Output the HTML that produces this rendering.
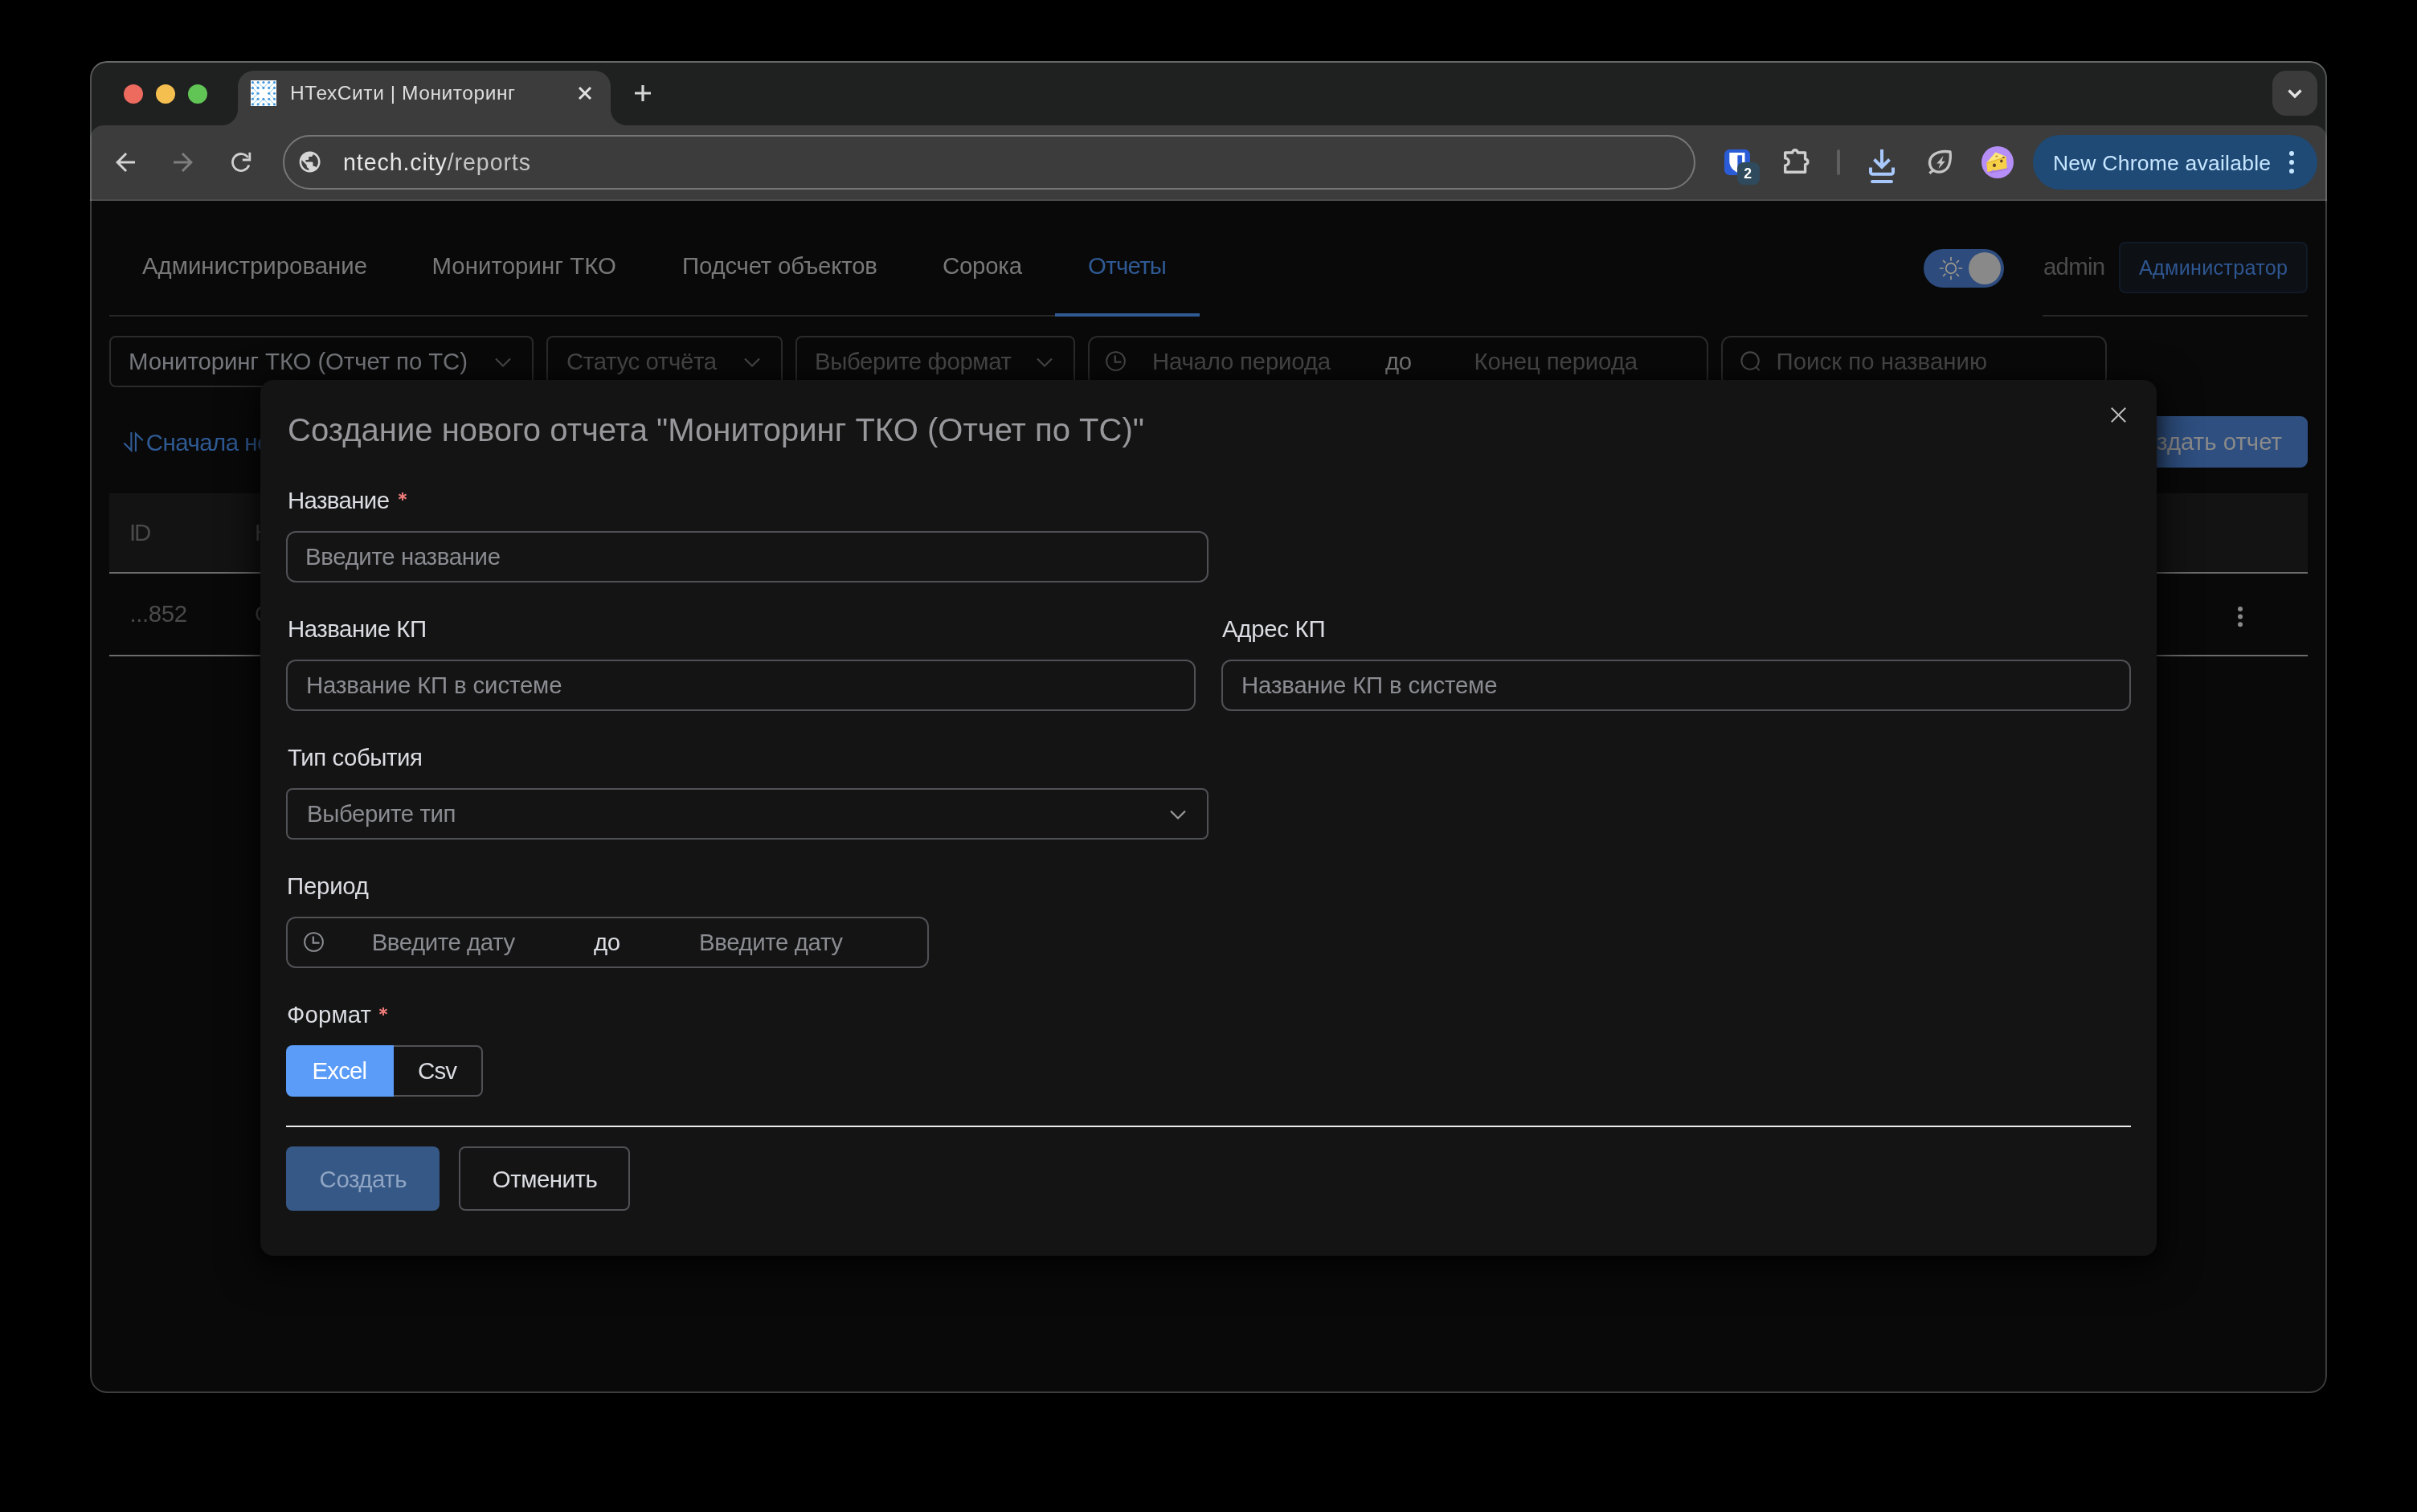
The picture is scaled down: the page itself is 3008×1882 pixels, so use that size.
<!DOCTYPE html>
<html lang="ru"><head><meta charset="utf-8"><title>НТехСити | Мониторинг</title>
<style>
html,body{margin:0;padding:0;background:#000;width:3008px;height:1882px;overflow:hidden}
body{position:relative;font-family:'Liberation Sans',sans-serif}
.t{position:absolute;line-height:1;white-space:pre}
.a{position:absolute;box-sizing:border-box}
#win{position:absolute;left:112px;top:76px;width:2784px;height:1658px;box-sizing:border-box;border-radius:21px;overflow:hidden;background:#090909}
#edge{position:absolute;left:0;top:0;width:2784px;height:1658px;box-sizing:border-box;border-radius:21px;box-shadow:inset 0 0 0 2px rgba(255,255,255,.215),inset 0 2px 0 0 rgba(255,255,255,.15);z-index:9;pointer-events:none}
#g{position:absolute;left:-112px;top:-76px;width:3008px;height:1882px;will-change:transform}
.box{position:absolute;box-sizing:border-box;border:2px solid #2b2b2b;border-radius:12px;background:#090909}
.in{position:absolute;box-sizing:border-box;border:2px solid #505155;border-radius:12px;background:#141414}
svg{position:absolute;overflow:visible}
</style></head>
<body>
<div id="win"><div id="g">
<!-- ===== tab strip ===== -->
<div class="a" style="left:112px;top:76px;width:2784px;height:98px;background:#1f2020"></div>
<div class="a" style="left:154px;top:105px;width:24px;height:24px;border-radius:50%;background:#ed6a5f"></div>
<div class="a" style="left:194px;top:105px;width:24px;height:24px;border-radius:50%;background:#f5bf4f"></div>
<div class="a" style="left:234px;top:105px;width:24px;height:24px;border-radius:50%;background:#61c555"></div>
<!-- active tab -->
<div class="a" style="left:296px;top:88px;width:464px;height:68px;background:#3c3c3c;border-radius:20px 20px 0 0"></div>
<div class="a" style="left:276px;top:136px;width:20px;height:20px;background:radial-gradient(circle at 0 0,rgba(60,60,60,0) 19.5px,#3c3c3c 20.5px)"></div>
<div class="a" style="left:760px;top:136px;width:20px;height:20px;background:radial-gradient(circle at 100% 0,rgba(60,60,60,0) 19.5px,#3c3c3c 20.5px)"></div>
<!-- favicon -->
<svg style="left:312px;top:100px" width="32" height="32" viewBox="0 0 32 32"><rect width="32" height="32" fill="#fff"/><path d="M2.4 2.6L9.1 9.4M9.1 2.6L15.9 9.4M22.7 2.6L15.9 9.4M29.5 2.6L22.7 9.4M2.4 9.4L9.1 16.3M2.4 23.2L9.1 16.3M29.5 9.4L22.7 16.3M29.5 23.2L22.7 16.3M2.4 29.9L9.1 23.2M9.1 29.9L15.9 23.2M22.7 29.9L15.9 23.2M29.5 29.9L22.7 23.2" stroke="#86c9e4" stroke-width="1" fill="none"/><g fill="#3f97dd"><circle cx="2.4" cy="2.6" r="1.55"/><circle cx="9.1" cy="2.6" r="1.55"/><circle cx="15.9" cy="2.6" r="1.55"/><circle cx="22.7" cy="2.6" r="1.55"/><circle cx="29.5" cy="2.6" r="1.55"/><circle cx="2.4" cy="9.4" r="1.55"/><circle cx="9.1" cy="9.4" r="1.55"/><circle cx="15.9" cy="9.4" r="1.55"/><circle cx="22.7" cy="9.4" r="1.55"/><circle cx="29.5" cy="9.4" r="1.55"/><circle cx="2.4" cy="16.3" r="1.55"/><circle cx="9.1" cy="16.3" r="1.55"/><circle cx="22.7" cy="16.3" r="1.55"/><circle cx="29.5" cy="16.3" r="1.55"/><circle cx="2.4" cy="23.2" r="1.55"/><circle cx="9.1" cy="23.2" r="1.55"/><circle cx="15.9" cy="23.2" r="1.55"/><circle cx="22.7" cy="23.2" r="1.55"/><circle cx="29.5" cy="23.2" r="1.55"/><circle cx="2.4" cy="29.9" r="1.55"/><circle cx="9.1" cy="29.9" r="1.55"/><circle cx="15.9" cy="29.9" r="1.55"/><circle cx="22.7" cy="29.9" r="1.55"/><circle cx="29.5" cy="29.9" r="1.55"/></g></svg>
<!-- tab close, plus -->
<svg style="left:720px;top:108px" width="16" height="16" viewBox="0 0 16 16"><path d="M1 1l14 14M15 1L1 15" stroke="#e2e2e2" stroke-width="3" fill="none"/></svg>
<svg style="left:790px;top:106px" width="20" height="20" viewBox="0 0 20 20"><path d="M10 0v20M0 10h20" stroke="#d6d6d6" stroke-width="3.2" fill="none"/></svg>
<!-- tab search -->
<div class="a" style="left:2828px;top:88px;width:56px;height:56px;border-radius:17px;background:#3b3b3b"></div>
<svg style="left:2847px;top:111px" width="18" height="11" viewBox="0 0 18 11"><path d="M1.5 1.5l7.5 7.5 7.5-7.5" stroke="#e2e2e2" stroke-width="3.4" fill="none"/></svg>
<!-- ===== toolbar ===== -->
<div class="a" style="left:112px;top:156px;width:2784px;height:94px;background:#3c3c3c;border-radius:17px 17px 0 0;border-bottom:2px solid #4b4d4b"></div>
<svg style="left:138px;top:184px" width="36" height="36" viewBox="0 0 24 24"><path fill="#d2d2d2" d="M20 11H7.83l5.59-5.59L12 4l-8 8 8 8 1.41-1.41L7.83 13H20v-2z"/></svg>
<svg style="left:210px;top:184px" width="36" height="36" viewBox="0 0 24 24"><path fill="#7e7e7e" d="M12 4l-1.41 1.41L16.17 11H4v2h12.17l-5.58 5.59L12 20l8-8z"/></svg>
<svg style="left:282px;top:184px" width="36" height="36" viewBox="282 184 36 36"><g fill="none" stroke="#d0d0d0" stroke-width="2.800"><path d="M308.600 195.980A10.500 10.500 0 1 0 309.870 205.590"/><path d="M310.800 189.800V199H301.800"/></g></svg>
<!-- omnibox -->
<div class="a" style="left:352px;top:168px;width:1758px;height:68px;border-radius:34px;border:2px solid #777;background:#3c3c3c"></div>
<svg style="left:370.4px;top:186.4px" width="31.2" height="31.2" viewBox="0 0 24 24"><path fill="#d6d6d6" d="M12 2C6.48 2 2 6.48 2 12s4.48 10 10 10 10-4.48 10-10S17.52 2 12 2zm-1 17.93c-3.95-.49-7-3.85-7-7.93 0-.62.08-1.21.21-1.79L9 15v1c0 1.1.9 2 2 2v1.93zm6.9-2.54c-.26-.81-1-1.39-1.9-1.39h-1v-3c0-.55-.45-1-1-1H8v-2h2c.55 0 1-.45 1-1V7h2c1.1 0 2-.9 2-2v-.41c2.93 1.19 5 4.06 5 7.41 0 2.08-.8 3.97-2.1 5.39z"/></svg>
<!-- bitwarden -->
<div class="a" style="left:2146px;top:186px;width:32px;height:32px;border-radius:6.5px;background:#2b5cd8"></div>
<svg style="left:2152px;top:189.500px" width="20" height="26" viewBox="0 0 20 26"><path fill="#fff" d="M.300 0h19.200v11c0 7-5.500 11.500-9.600 13.600C5.800 22.500.300 18 .300 11z"/><path fill="#2b5cd8" d="M10.400 3.300h5.700v7.900c0 4.200-2.900 7.200-5.700 9z"/></svg>
<div class="a" style="left:2162px;top:202px;width:28px;height:28px;border-radius:8px;background:#2e4a5c"></div>
<span class="t" style="left:2170.300px;top:207.600px;font-size:17.600px;font-weight:bold;color:#fff">2</span>
<!-- puzzle -->
<svg style="left:2220px;top:184px" width="32" height="32" viewBox="0 0 32 32"><path fill="none" stroke="#cfcfcf" stroke-width="3.400" stroke-linejoin="round" d="M1.700 6H10.700A3.300 3.300 0 0 1 17.300 6H26.600V14.100A3.300 3.300 0 0 1 26.600 20.700V30.300H1.700V21.900A4.500 4.500 0 0 0 1.700 12.900z"/></svg>
<div class="a" style="left:2286.300px;top:186px;width:3.800px;height:32px;border-radius:2px;background:#5f5f5f"></div>
<!-- download -->
<svg style="left:2322px;top:182px" width="40" height="50" viewBox="0 0 40 50"><g fill="none" stroke="#a8c7fa" stroke-width="4"><path d="M20 4v22M10.500 16.500L20 26l9.500-9.500"/><path d="M6 26.400v5.900a2.500 2.500 0 0 0 2.500 2.500h23a2.500 2.500 0 0 0 2.500-2.500v-5.900"/><path d="M8 44h24" stroke-linecap="round"/></g></svg>
<!-- leaf / energy -->
<svg style="left:2398px;top:184px" width="34" height="36" viewBox="0 0 34 36"><path fill="none" stroke="#c4c4c4" stroke-width="3.300" stroke-linejoin="round" d="M29 5C21 3.800 9.500 4.500 5 12.500 1.700 18.500 4 26 9.500 28.700c7 3.400 15.500.300 18.200-7.700C29.500 15.500 29.700 10 29 5zM9 27l-5.700 4.800"/><path fill="#c4c4c4" d="M20.600 10l-8.300 9.400h4.300l-2.100 6.800 8.300-9.500h-4.300z"/></svg>
<!-- avatar -->
<div class="a" style="left:2466px;top:182px;width:40px;height:40px;border-radius:50%;background:#b68ef8"></div>
<svg style="left:2466px;top:182px" width="40" height="40" viewBox="0 0 40 40"><path fill="#a47be6" d="M8 31.500l24-4.500 2 1.500-22 5z"/><path fill="#f6d046" d="M6.300 20.600L30.600 12.800l1.100 14.600L7.400 31.900z"/><path fill="#fce77a" d="M6.300 20.600L17.500 7.500l13.100 5.300z"/><path fill="#e9b932" d="M6.300 20.600l24.300-7.800.1 1.300L6.400 22z"/><ellipse cx="16" cy="23.700" rx="2" ry="2.300" fill="#5f3a2a"/><ellipse cx="24.800" cy="18.400" rx="1.600" ry="1.900" fill="#5f3a2a"/><ellipse cx="18.800" cy="12.400" rx="1.500" ry="1" fill="#b8862a"/><ellipse cx="27.300" cy="13.800" rx="1.300" ry=".900" fill="#5f3a2a"/><path fill="#b68ef8" d="M12.500 31l1.500-2.200 2 1.400z"/></svg>
<!-- update pill -->
<div class="a" style="left:2530px;top:168px;width:354px;height:68px;border-radius:34px;background:#1f4a76"></div>
<div class="a" style="left:2848.700px;top:187.700px;width:6.600px;height:6.600px;border-radius:50%;background:#c6e6ff;box-shadow:0 11px 0 #c6e6ff,0 22px 0 #c6e6ff"></div>

<!-- ===== page (dimmed by modal mask) ===== -->
<div class="a" style="left:136px;top:392px;width:1357px;height:2px;background:#272727"></div>
<div class="a" style="left:1313px;top:390px;width:180px;height:4px;background:#2f5a94"></div>
<div class="a" style="left:2542px;top:392px;width:330px;height:2px;background:#272727"></div>
<!-- theme toggle -->
<div class="a" style="left:2394px;top:310px;width:100px;height:48px;border-radius:24px;background:#2d4b7d"></div>
<div class="a" style="left:2450px;top:314px;width:40px;height:40px;border-radius:50%;background:#898989"></div>
<svg style="left:2413px;top:319px" width="30" height="30" viewBox="0 0 30 30"><g stroke="#a09a8d" stroke-width="1.700" fill="none" stroke-linecap="round"><circle cx="15" cy="15" r="6.300"/><path d="M15 1.500v3.500M15 25v3.500M1.500 15H5M25 15h3.500M5.500 5.500l2.400 2.400M22.100 22.100l2.400 2.400M5.500 24.500l2.400-2.400M22.100 7.900l2.400-2.400"/></g></svg>
<div class="a" style="left:2637px;top:301px;width:235px;height:64px;border-radius:8px;background:#0d1015;border:2px solid #111a27"></div>
<!-- filter row -->
<div class="box" style="left:136px;top:418px;width:528px;height:64px;border-radius:8px"></div>
<div class="box" style="left:680px;top:418px;width:294px;height:64px;border-radius:8px"></div>
<div class="box" style="left:990px;top:418px;width:348px;height:64px;border-radius:8px"></div>
<div class="box" style="left:1354px;top:418px;width:772px;height:64px"></div>
<div class="box" style="left:2142px;top:418px;width:480px;height:64px"></div>
<svg style="left:616px;top:445px" width="20" height="12" viewBox="0 0 20 12"><path d="M1 1.500l9 9 9-9" stroke="#474747" stroke-width="2.200" fill="none"/></svg>
<svg style="left:926px;top:445px" width="20" height="12" viewBox="0 0 20 12"><path d="M1 1.500l9 9 9-9" stroke="#474747" stroke-width="2.200" fill="none"/></svg>
<svg style="left:1289.500px;top:445px" width="20" height="12" viewBox="0 0 20 12"><path d="M1 1.500l9 9 9-9" stroke="#474747" stroke-width="2.200" fill="none"/></svg>
<svg style="left:1375.500px;top:437.200px" width="25" height="25" viewBox="0 0 25 25"><g stroke="#474747" fill="none"><circle cx="12.500" cy="12.500" r="11.400" stroke-width="1.900"/><path d="M11.800 5.400V13.700H19.500" stroke-width="2.200"/></g></svg>
<svg style="left:2166px;top:437px" width="26" height="26" viewBox="0 0 28 28"><g stroke="#474747" stroke-width="2.200" fill="none"><circle cx="13" cy="13" r="11.500"/><path d="M21 21.500l4.500 4.500"/></g></svg>
<!-- sort icon -->
<svg style="left:150px;top:530px" width="32" height="36" viewBox="150 530 32 36"><path d="M163.400 538V560.600L154.400 551.400M168.900 562V539.700L177.800 548.300" stroke="#2f5b96" stroke-width="2.100" fill="none"/></svg>
<!-- create report button -->
<div class="a" style="left:2600px;top:518px;width:272px;height:64px;border-radius:9px;background:#2e4f80"></div>
<!-- table -->
<div class="a" style="left:136px;top:614px;width:2736px;height:98px;background:#131313"></div>
<div class="a" style="left:136px;top:712px;width:2736px;height:2px;background:#6c6c6c"></div>
<div class="a" style="left:136px;top:814.500px;width:2736px;height:2px;background:#6c6c6c"></div>
<div class="a" style="left:2784.500px;top:754.500px;width:6.400px;height:6.400px;border-radius:50%;background:#8a8a8a;box-shadow:0 9.600px 0 #8a8a8a,0 19.200px 0 #8a8a8a"></div>
<span class="t" style="left:361px;top:103.8px;font-size:24.5px;color:#dedede;letter-spacing:0.562px;">НТехСити | Мониторинг</span>
<span class="t" style="left:427px;top:187.7px;font-size:28.6px;color:#e6e6e6;letter-spacing:0.898px;">ntech.city<span style="color:#c4c4c4">/reports</span></span>
<span class="t" style="left:2555px;top:189.5px;font-size:26.5px;color:#c6e6ff;letter-spacing:0.232px;">New Chrome available</span>
<span class="t" style="left:177px;top:316.0px;font-size:29.4px;color:#787878;letter-spacing:-0.017px;">Администрирование</span>
<span class="t" style="left:537.5px;top:316.0px;font-size:29.4px;color:#787878;letter-spacing:0.055px;">Мониторинг ТКО</span>
<span class="t" style="left:849px;top:316.0px;font-size:29.4px;color:#787878;letter-spacing:-0.191px;">Подсчет объектов</span>
<span class="t" style="left:1173px;top:316.0px;font-size:29.4px;color:#787878;letter-spacing:-0.225px;">Сорока</span>
<span class="t" style="left:1354px;top:316.0px;font-size:29.4px;color:#2f5a94;letter-spacing:-0.719px;">Отчеты</span>
<span class="t" style="left:2543px;top:317.2px;font-size:29.4px;color:#4c4c4c;letter-spacing:-0.766px;">admin</span>
<span class="t" style="left:2662px;top:320.5px;font-size:25.2px;color:#2e5690;letter-spacing:0.272px;">Администратор</span>
<span class="t" style="left:160px;top:435.0px;font-size:29.4px;color:#75777c;letter-spacing:-0.102px;">Мониторинг ТКО (Отчет по ТС)</span>
<span class="t" style="left:705px;top:435.0px;font-size:29.4px;color:#474747;letter-spacing:-0.365px;">Статус отчёта</span>
<span class="t" style="left:1014px;top:435.0px;font-size:29.4px;color:#474747;letter-spacing:-0.374px;">Выберите формат</span>
<span class="t" style="left:1434px;top:435.0px;font-size:29.4px;color:#474747;letter-spacing:-0.215px;">Начало периода</span>
<span class="t" style="left:1724px;top:435.0px;font-size:29.4px;color:#777;letter-spacing:-0.500px;">до</span>
<span class="t" style="left:1834.5px;top:435.0px;font-size:29.4px;color:#474747;letter-spacing:-0.147px;">Конец периода</span>
<span class="t" style="left:2210.6px;top:435.0px;font-size:29.4px;color:#474747;letter-spacing:0.020px;">Поиск по названию</span>
<span class="t" style="left:181.8px;top:535.5px;font-size:29.4px;color:#2f5a94;letter-spacing:-0.512px;">Сначала новые</span>
<span class="t" style="right:168px;top:534.5px;font-size:29.4px;color:#8a8a8a;">Создать отчет</span>
<span class="t" style="left:161px;top:648.0px;font-size:29.4px;color:#4a4a4a;letter-spacing:-2.206px;">ID</span>
<span class="t" style="left:317px;top:648.0px;font-size:29.4px;color:#4a4a4a;">Название</span>
<span class="t" style="left:161.5px;top:748.5px;font-size:29.4px;color:#4a4a4a;letter-spacing:-0.409px;">...852</span>
<span class="t" style="left:317px;top:748.5px;font-size:29.4px;color:#4a4a4a;">Отчет</span>

<!-- ===== modal ===== -->
<div class="a" style="left:324px;top:473px;width:2360px;height:1090px;border-radius:16px;background:#141414;box-shadow:0 12px 44px 10px rgba(0,0,0,.55),0 4px 18px rgba(0,0,0,.5);z-index:3"></div>
<div class="a" style="left:0;top:0;width:3008px;height:1882px;z-index:4">
<svg style="left:2626.500px;top:506.500px" width="19" height="19" viewBox="0 0 19 19"><path d="M.800.800l17.400 17.400M18.200.800L.800 18.200" stroke="#bdbdbd" stroke-width="2" fill="none"/></svg>
<div class="in" style="left:356px;top:661px;width:1148px;height:64px"></div>
<div class="in" style="left:356px;top:821px;width:1132px;height:64px"></div>
<div class="in" style="left:1520px;top:821px;width:1132px;height:64px"></div>
<div class="in" style="left:356px;top:981px;width:1148px;height:64px;border-radius:8px"></div>
<svg style="left:1456px;top:1008px" width="20" height="12" viewBox="0 0 20 12"><path d="M1 1.500l9 9 9-9" stroke="#9a9a9a" stroke-width="2.200" fill="none"/></svg>
<div class="in" style="left:356px;top:1141px;width:800px;height:64px"></div>
<svg style="left:378px;top:1160.300px" width="25" height="25" viewBox="0 0 25 25"><g stroke="#8d8f95" fill="none"><circle cx="12.500" cy="12.500" r="11.400" stroke-width="1.900"/><path d="M11.800 5.400V13.700H19.500" stroke-width="2.200"/></g></svg>
<svg style="left:494.8px;top:612.2px" width="12" height="12" viewBox="-6 -6 12 12"><path d="M0-5.100V5.100M-4.600-2.650L4.600 2.650M-4.600 2.650L4.600-2.650" stroke="#ea7a78" stroke-width="2.100" fill="none"/></svg>
<svg style="left:471px;top:1252.6px" width="12" height="12" viewBox="-6 -6 12 12"><path d="M0-5.100V5.100M-4.600-2.650L4.600 2.650M-4.600 2.650L4.600-2.650" stroke="#ea7a78" stroke-width="2.100" fill="none"/></svg>
<!-- radio -->
<div class="a" style="left:488px;top:1301px;width:113px;height:64px;border:2px solid #505155;border-radius:0 8px 8px 0;background:#141414"></div>
<div class="a" style="left:356px;top:1301px;width:134px;height:64px;border-radius:8px 0 0 8px;background:#5b9cf8"></div>
<!-- divider -->
<div class="a" style="left:356px;top:1401px;width:2296px;height:2px;background:#ececec"></div>
<!-- buttons -->
<div class="a" style="left:356px;top:1427px;width:191px;height:80px;border-radius:8px;background:#365886"></div>
<div class="a" style="left:571px;top:1427px;width:213px;height:80px;border-radius:8px;border:2px solid #505155;background:#141414"></div>
</div>
<div class="a" style="left:0;top:0;width:3008px;height:1882px;z-index:5">
<span class="t" style="left:358px;top:514.6px;font-size:40px;color:#98989c;letter-spacing:0.017px;">Создание нового отчета "Мониторинг ТКО (Отчет по ТС)"</span>
<span class="t" style="left:358px;top:607.6px;font-size:29.4px;color:#dcdde3;letter-spacing:-0.621px;">Название</span>
<span class="t" style="left:358px;top:767.5px;font-size:29.4px;color:#dcdde3;letter-spacing:-0.475px;">Название КП</span>
<span class="t" style="left:1521px;top:767.5px;font-size:29.4px;color:#dcdde3;letter-spacing:-0.280px;">Адрес КП</span>
<span class="t" style="left:358px;top:927.7px;font-size:29.4px;color:#dcdde3;letter-spacing:-0.430px;">Тип события</span>
<span class="t" style="left:357px;top:1088.0px;font-size:29.4px;color:#dcdde3;letter-spacing:-0.219px;">Период</span>
<span class="t" style="left:357px;top:1248.0px;font-size:29.4px;color:#dcdde3;letter-spacing:0.119px;">Формат</span>
<span class="t" style="left:380px;top:678.0px;font-size:29.4px;color:#8b8c92;letter-spacing:-0.344px;">Введите название</span>
<span class="t" style="left:381px;top:838.0px;font-size:29.4px;color:#8b8c92;letter-spacing:-0.152px;">Название КП в системе</span>
<span class="t" style="left:1545px;top:838.0px;font-size:29.4px;color:#8b8c92;letter-spacing:-0.152px;">Название КП в системе</span>
<span class="t" style="left:382px;top:998.0px;font-size:29.4px;color:#8b8c92;letter-spacing:-0.389px;">Выберите тип</span>
<span class="t" style="left:462.7px;top:1158.3px;font-size:29.4px;color:#8b8c92;letter-spacing:-0.422px;">Введите дату</span>
<span class="t" style="left:739px;top:1158.3px;font-size:29.4px;color:#dcdde3;letter-spacing:-0.500px;">до</span>
<span class="t" style="left:870px;top:1158.3px;font-size:29.4px;color:#8b8c92;letter-spacing:-0.376px;">Введите дату</span>
<span class="t" style="left:388.6px;top:1318.2px;font-size:29.4px;color:#fff;letter-spacing:-0.869px;">Excel</span>
<span class="t" style="left:520px;top:1318.2px;font-size:29.4px;color:#dcdde3;letter-spacing:-0.812px;">Csv</span>
<span class="t" style="left:397.6px;top:1452.7px;font-size:29.4px;color:#8fa5c3;letter-spacing:-0.434px;">Создать</span>
<span class="t" style="left:612.8px;top:1452.7px;font-size:29.4px;color:#dcdde3;letter-spacing:-0.471px;">Отменить</span>
</div>
</div><div id="edge"></div></div>
</body></html>
